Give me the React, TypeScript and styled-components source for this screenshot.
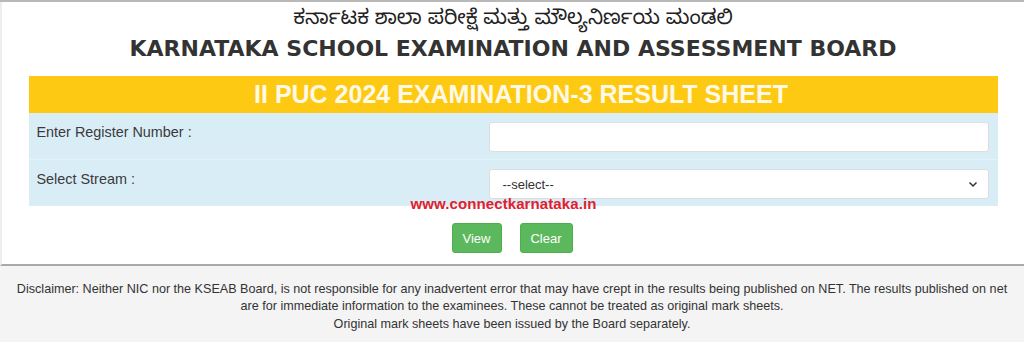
import React from "react";
import styled, { createGlobalStyle } from "styled-components";

const Global = createGlobalStyle`
  html, body { margin: 0; padding: 0; background: #f4f4f4; }
  body { font-family: "Liberation Sans", Arial, sans-serif; color: #333; }
`;

const Page = styled.div`
  width: 1024px;
  height: 342px;
  overflow: hidden;
  display: flex;
  flex-direction: column;
  box-sizing: border-box;
  border-top: 2px solid #b9b9b9;
`;

const Main = styled.main`
  background: #fff;
  height: 264px;
  box-sizing: border-box;
  border-left: 2px solid #ededed;
  border-bottom: 2px solid #a9a9a9;
  box-shadow: 0 1px 2px rgba(0, 0, 0, 0.15);
  display: flex;
  flex-direction: column;
  align-items: center;
`;

const KannadaTitle = styled.h2`
  margin: 6px 0 0;
  font-family: "Noto Sans Kannada", "Noto Sans", sans-serif;
  font-weight: 400;
  font-size: 20.5px;
  line-height: 26px;
  color: #222;
`;

const EnglishTitle = styled.h1`
  margin: 0;
  font-family: "DejaVu Sans", Verdana, sans-serif;
  font-weight: 700;
  font-size: 22px;
  line-height: 29px;
  color: #333;
`;

const Container = styled.div`
  width: 969px;
  margin-top: 13px;
  position: relative;
`;

const Banner = styled.div`
  background: #fdc913;
  height: 37px;
  display: flex;
  align-items: center;
  justify-content: center;
  padding-left: 16px;
  color: #fff9e6;
  font-weight: 700;
  font-size: 25px;
  font-family: "Liberation Sans", Arial, sans-serif;
`;

const Form = styled.div`
  background: #d9edf7;
  display: flex;
  flex-direction: column;
`;

const Row = styled.div<{ $divider?: boolean }>`
  display: grid;
  grid-template-columns: 460px 500px;
  align-items: start;
  height: ${(p) => (p.$divider ? "47px" : "46px")};
  box-sizing: border-box;
  padding-top: 9px;
  border-bottom: ${(p) => (p.$divider ? "1px solid #e3f1f8" : "none")};
`;

const Label = styled.label`
  padding-left: 8px;
  padding-top: 1px;
  font-size: 14.4px;
  line-height: 18px;
  color: #3a3a3a;
`;

const TextInput = styled.input`
  height: 30px;
  box-sizing: border-box;
  border: 1px solid #ddd;
  border-radius: 3px;
  background: #fff;
  font-family: "Liberation Sans", Arial, sans-serif;
  font-size: 13px;
  padding: 0 8px;
`;

const SelectBox = styled.div`
  height: 30px;
  box-sizing: border-box;
  border: 1px solid #ddd;
  border-radius: 3px;
  background: #fff;
  display: flex;
  align-items: center;
  justify-content: space-between;
  padding: 0 10px 0 13px;
  font-size: 13px;
  color: #333;
`;

const Watermark = styled.div`
  position: absolute;
  left: 382px;
  top: 119px;
  color: #e0202c;
  font-weight: 700;
  font-size: 15px;
  font-family: "Liberation Sans", Arial, sans-serif;
  letter-spacing: 0.1px;
`;

const Buttons = styled.div`
  display: flex;
  justify-content: center;
  gap: 18px;
  margin-top: 17px;
  padding-right: 2px;
`;

const Button = styled.button<{ $w: number }>`
  width: ${(p) => p.$w}px;
  height: 30px;
  background: #5cb85c;
  border: 1px solid #4cae4c;
  border-radius: 3px;
  color: #fff;
  font-family: "Liberation Sans", Arial, sans-serif;
  font-size: 13px;
  padding: 0;
`;

const Footer = styled.footer`
  flex: 1;
  background: #f4f4f4;
  text-align: center;
  font-size: 12.6px;
  line-height: 17.4px;
  color: #333;
  padding-top: 15px;
`;

const Chevron = () => (
  <svg width="10" height="10" viewBox="0 0 10 10">
    <path d="M1.5 3.5 L5 7 L8.5 3.5" fill="none" stroke="#333" strokeWidth="1.5" />
  </svg>
);

export default function App() {
  return (
    <>
      <Global />
      <Page>
        <Main>
          <KannadaTitle>ಕರ್ನಾಟಕ ಶಾಲಾ ಪರೀಕ್ಷೆ ಮತ್ತು ಮೌಲ್ಯನಿರ್ಣಯ ಮಂಡಲಿ</KannadaTitle>
          <EnglishTitle>KARNATAKA SCHOOL EXAMINATION AND ASSESSMENT BOARD</EnglishTitle>
          <Container>
            <Banner>II PUC 2024 EXAMINATION-3 RESULT SHEET</Banner>
            <Form>
              <Row $divider>
                <Label>Enter Register Number :</Label>
                <TextInput type="text" />
              </Row>
              <Row>
                <Label>Select Stream :</Label>
                <SelectBox>
                  <span>--select--</span>
                  <Chevron />
                </SelectBox>
              </Row>
            </Form>
            <Watermark>www.connectkarnataka.in</Watermark>
            <Buttons>
              <Button $w={50}>View</Button>
              <Button $w={53}>Clear</Button>
            </Buttons>
          </Container>
        </Main>
        <Footer>
          Disclaimer: Neither NIC nor the KSEAB Board, is not responsible for any inadvertent error that may have crept in the results being published on NET. The results published on net
          <br />
          are for immediate information to the examinees. These cannot be treated as original mark sheets.
          <br />
          Original mark sheets have been issued by the Board separately.
        </Footer>
      </Page>
    </>
  );
}
